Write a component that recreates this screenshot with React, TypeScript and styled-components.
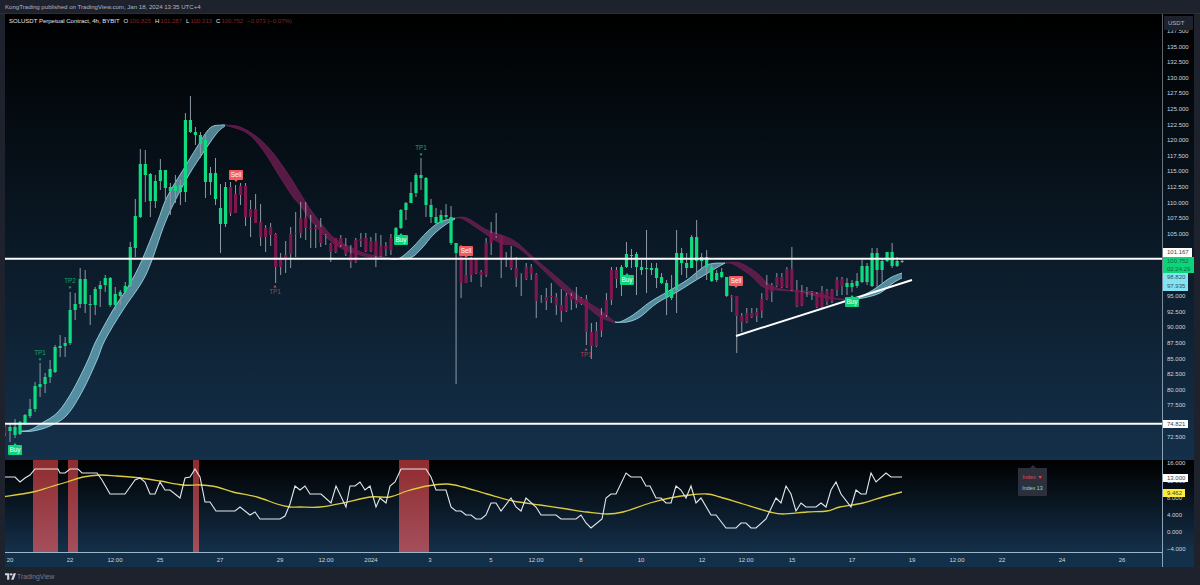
import React from "react";
import styled, { createGlobalStyle } from "styled-components";

type Pt = [number, number];
type Candle = [number, number, number, number];

const FONT = '"Liberation Sans", Arial, sans-serif';

const downA: Candle[] = [[425, 427, 433, 436]];
const upA: Candle[] = [
  [423, 427, 431, 442], [419, 427, 435, 438], [421, 422, 434, 435], [414, 415, 423, 425], [399, 409, 416, 418],
  [382, 386, 409, 412], [363, 384, 387, 397], [373, 377, 384, 393], [360, 369, 377, 383], [345, 347, 372, 373],
  [335, 346, 348, 357], [337, 343, 346, 357], [292, 310, 343, 345], [293, 304, 310, 320], [268, 279, 304, 308],
  [270, 279, 304, 313], [295, 304, 305, 325], [287, 289, 305, 315], [281, 285, 289, 307], [275, 278, 285, 292],
  [277, 278, 305, 307], [287, 294, 305, 310], [290, 292, 296, 305], [282, 286, 292, 293], [242, 247, 286, 287],
  [199, 216, 248, 257], [149, 164, 217, 218], [150, 164, 175, 202], [173, 174, 201, 217], [175, 181, 201, 208],
  [159, 170, 181, 190], [170, 170, 188, 202], [183, 187, 191, 215], [175, 186, 191, 203], [180, 185, 192, 205],
  [113, 120, 192, 202], [96, 120, 132, 133], [127, 132, 135, 145], [132, 135, 144, 158], [133, 140, 182, 198],
  [167, 173, 182, 195], [158, 173, 199, 205], [184, 208, 224, 253], [182, 187, 224, 227],
];
const downB: Candle[] = [
  [182, 187, 213, 216], [185, 194, 213, 213], [183, 186, 195, 205], [183, 186, 217, 226], [200, 209, 217, 237],
  [194, 209, 223, 223], [204, 222, 237, 246], [225, 228, 237, 252], [223, 227, 235, 246], [233, 234, 267, 283],
  [253, 258, 267, 275], [241, 255, 258, 273], [227, 234, 254, 268], [212, 233, 234, 257], [202, 218, 233, 238],
  [202, 218, 228, 240], [215, 228, 229, 248], [225, 227, 229, 248], [218, 227, 243, 247], [234, 235, 236, 245],
  [243, 244, 252, 262], [238, 238, 252, 253], [235, 238, 245, 247], [238, 246, 254, 256], [245, 254, 262, 268],
  [238, 240, 262, 263], [233, 239, 241, 247], [233, 238, 251, 252], [237, 241, 251, 252], [233, 241, 256, 267],
  [235, 246, 256, 257], [242, 246, 249, 256], [234, 238, 250, 255],
];
const upB: Candle[] = [
  [227, 228, 237, 238], [209, 210, 228, 229], [202, 203, 210, 220], [182, 193, 203, 203], [173, 175, 193, 197],
  [158, 175, 178, 190], [177, 178, 205, 217], [199, 205, 217, 223], [208, 217, 223, 224], [210, 215, 223, 223],
  [204, 215, 217, 220], [206, 217, 243, 245], [243, 243, 253, 384],
];
const downC: Candle[] = [
  [245, 253, 283, 298], [258, 275, 283, 283], [257, 259, 275, 282], [258, 259, 273, 274], [270, 272, 275, 287],
  [238, 243, 275, 277], [222, 233, 243, 255], [213, 234, 236, 238], [235, 235, 259, 278], [252, 258, 259, 267],
  [246, 260, 268, 270], [257, 268, 278, 287], [273, 273, 274, 296], [263, 267, 279, 280], [264, 267, 274, 280],
  [273, 274, 301, 318], [295, 301, 302, 303], [288, 297, 301, 310], [283, 296, 297, 303], [293, 297, 305, 315],
  [289, 305, 311, 322], [293, 296, 311, 312], [293, 296, 300, 310], [287, 300, 304, 308], [297, 298, 304, 305],
  [295, 299, 332, 345], [323, 332, 346, 359], [322, 331, 346, 347], [308, 315, 331, 337], [293, 300, 315, 317],
  [267, 270, 300, 305], [267, 270, 279, 288],
];
const upC: Candle[] = [
  [265, 267, 283, 296], [242, 254, 267, 268], [249, 255, 256, 268], [252, 254, 267, 295], [260, 267, 270, 275],
  [230, 268, 269, 293], [263, 268, 270, 275], [263, 268, 278, 288], [273, 277, 283, 284], [280, 283, 298, 315],
  [275, 289, 298, 300], [230, 253, 290, 313], [248, 253, 263, 275], [253, 263, 268, 278], [235, 237, 268, 268],
  [220, 237, 261, 280], [253, 257, 261, 270], [250, 257, 267, 280], [263, 267, 281, 282], [270, 273, 280, 282],
  [268, 272, 277, 278], [277, 277, 296, 297],
];
const downD: Candle[] = [
  [295, 296, 297, 312], [296, 296, 316, 353], [313, 316, 322, 332], [308, 313, 322, 323], [308, 313, 317, 318],
  [308, 312, 316, 322], [293, 299, 311, 318], [275, 285, 299, 300], [283, 285, 292, 302], [273, 277, 286, 287],
  [273, 277, 287, 288], [267, 269, 287, 288], [247, 269, 290, 291], [280, 290, 306, 307], [285, 292, 305, 306],
  [287, 291, 292, 297], [291, 292, 293, 300], [292, 294, 307, 308], [286, 291, 307, 308], [289, 291, 302, 305],
  [289, 290, 301, 303], [277, 280, 290, 296], [277, 279, 286, 295],
];
const upD: Candle[] = [
  [278, 283, 287, 295], [280, 283, 287, 292], [273, 281, 286, 288], [260, 266, 282, 283], [263, 266, 282, 285],
  [248, 253, 286, 287], [248, 253, 270, 288], [258, 261, 270, 283], [252, 252, 261, 262], [243, 252, 266, 268],
  [257, 261, 266, 267], [258, 261, 262, 263],
];

const runs: { up: boolean; rows: Candle[] }[] = [
  { up: false, rows: downA },
  { up: true, rows: upA },
  { up: false, rows: downB },
  { up: true, rows: upB },
  { up: false, rows: downC },
  { up: true, rows: upC },
  { up: false, rows: downD },
  { up: true, rows: upD },
];

const candles = runs
  .flatMap((r) => r.rows.map((c) => ({ up: r.up, c })))
  .map((d, i) => ({ ...d, x: 10 + (i - 1) * 5.012 }));

const ribbons: { up: boolean; top: Pt[]; bottom: Pt[] }[] = [
  {
    up: true,
    top: [[20, 431], [30, 430], [42, 423], [58, 412], [73, 390], [88, 360], [96, 341], [113, 310], [128, 287], [142, 260], [157, 223], [167, 197], [183, 170], [197, 147], [210, 128], [222, 125], [225, 125]],
    bottom: [[20, 431.5], [33, 431], [50, 426], [67, 415], [83, 390], [97, 360], [105, 340], [123, 310], [142, 282], [152, 260], [165, 223], [177, 197], [190, 173], [203, 153], [217, 133], [225, 126]],
  },
  {
    up: false,
    top: [[225, 125], [240, 127], [257, 137], [273, 153], [290, 177], [300, 193], [313, 213], [333, 237], [350, 247], [367, 254], [390, 258]],
    bottom: [[225, 125], [247, 133], [263, 150], [280, 177], [293, 197], [300, 205], [313, 223], [333, 243], [350, 252], [373, 258], [390, 259]],
  },
  {
    up: true,
    top: [[390, 259], [400, 258], [413, 247], [427, 232], [440, 222], [455, 218]],
    bottom: [[390, 259], [410, 258], [422, 248], [433, 235], [445, 225], [455, 219]],
  },
  {
    up: false,
    top: [[455, 218], [467, 218], [487, 230], [513, 240], [533, 257], [560, 280], [580, 297], [600, 310], [615, 322]],
    bottom: [[455, 218], [463, 219], [480, 230], [500, 243], [517, 247], [540, 267], [567, 293], [587, 307], [600, 317], [615, 323]],
  },
  {
    up: true,
    top: [[615, 322], [620, 322], [633, 315], [650, 302], [667, 292], [687, 280], [707, 265], [725, 263]],
    bottom: [[615, 322], [627, 322], [640, 317], [657, 303], [677, 292], [693, 282], [713, 270], [725, 263]],
  },
  {
    up: false,
    top: [[725, 263], [740, 263], [757, 273], [770, 285], [787, 290], [813, 292], [833, 298], [845, 299]],
    bottom: [[725, 263], [733, 264], [750, 275], [763, 287], [777, 290], [800, 292], [820, 297], [845, 300]],
  },
  {
    up: true,
    top: [[845, 299], [857, 298], [873, 290], [890, 278], [902, 273]],
    bottom: [[845, 300], [863, 298], [880, 293], [893, 283], [902, 278]],
  },
];

const indexLine: Pt[] = [
  [5, 477], [15, 477], [20, 482], [25, 478], [30, 475], [35, 469], [48, 469], [58, 469], [60, 473], [65, 473], [70, 469], [78, 469], [82, 473], [97, 473],
  [102, 480], [110, 494], [125, 494], [130, 487], [135, 480], [140, 478], [145, 482], [150, 494], [155, 494], [160, 482], [165, 490], [170, 490], [180, 498],
  [185, 478], [190, 477], [195, 469], [200, 477], [205, 502], [210, 502], [216, 511], [235, 511], [240, 507], [250, 515], [255, 512], [260, 519], [280, 519],
  [285, 516], [290, 504], [295, 486], [300, 490], [305, 486], [310, 494], [321, 494], [331, 503], [336, 486], [346, 507], [350, 486], [355, 486], [360, 482],
  [365, 490], [370, 486], [376, 507], [380, 498], [386, 503], [390, 486], [395, 482], [401, 469], [426, 469], [431, 477], [436, 490], [446, 490], [451, 507],
  [456, 511], [461, 511], [466, 515], [471, 515], [476, 519], [481, 519], [486, 515], [491, 503], [496, 503], [501, 511], [511, 498], [516, 507], [521, 511],
  [526, 498], [536, 507], [541, 515], [556, 515], [561, 519], [576, 519], [581, 515], [586, 523], [591, 528], [602, 519], [606, 498], [611, 494], [616, 494],
  [626, 473], [631, 477], [641, 477], [646, 486], [650, 486], [656, 498], [661, 498], [666, 503], [671, 503], [676, 486], [681, 490], [686, 498], [691, 486],
  [696, 503], [701, 498], [711, 515], [716, 515], [726, 528], [736, 528], [741, 523], [746, 523], [751, 528], [756, 528], [766, 519], [776, 498], [781, 503],
  [786, 486], [791, 494], [796, 511], [801, 503], [806, 507], [816, 507], [821, 503], [826, 507], [831, 490], [836, 482], [841, 494], [851, 507], [856, 490],
  [861, 494], [866, 494], [871, 473], [876, 482], [886, 473], [891, 477], [902, 477],
];

const signalLine: Pt[] = [
  [5, 496.5], [33, 492], [50, 487], [67, 482], [83, 477], [100, 475], [117, 476], [140, 478], [160, 481], [183, 485], [200, 485], [217, 487], [233, 492],
  [257, 497], [277, 504], [290, 507], [300, 507], [320, 507], [343, 503], [370, 497], [390, 497], [407, 491], [427, 486], [447, 484], [463, 487], [487, 494],
  [513, 501], [540, 505], [567, 509], [587, 512], [607, 514], [623, 512], [650, 503], [670, 498], [690, 495], [707, 494], [720, 497], [743, 504], [770, 512],
  [783, 514], [807, 512], [827, 511], [840, 507], [863, 503], [883, 497], [902, 492],
];

const zones: [number, number][] = [[33, 58], [68, 78], [193, 199], [399, 429]];

const signals: { kind: "Buy" | "Sell"; x: number; y: number }[] = [
  { kind: "Buy", x: 15, y: 445 },
  { kind: "Sell", x: 236, y: 170 },
  { kind: "Buy", x: 401, y: 235 },
  { kind: "Sell", x: 466, y: 246 },
  { kind: "Buy", x: 627, y: 275 },
  { kind: "Sell", x: 736, y: 276 },
  { kind: "Buy", x: 852, y: 297 },
];

const targets: { label: string; up: boolean; x: number; y: number }[] = [
  { label: "TP1", up: true, x: 40, y: 353 },
  { label: "TP2", up: true, x: 70, y: 281 },
  { label: "TP1", up: true, x: 421, y: 148 },
  { label: "TP1", up: false, x: 275, y: 292 },
  { label: "TP1", up: false, x: 586, y: 355 },
];

// these levels sit behind the last-price tags in the picture, so they keep their row but show nothing
const coveredTicks = ["102.500", "100.000", "97.500", "75.000"];
const priceTicks = Array.from({ length: 27 }, (_, i) => (137.5 - i * 2.5).toFixed(3));
const indexTicks = ["16.000", "12.000", "8.000", "4.000", "0.000", "\u22124.000"];
const timeLabels: [string, number][] = [
  ["20", 15], ["22", 75], ["12:00", 120], ["25", 165], ["27", 225], ["29", 285], ["12:00", 331], ["2024", 376], ["3", 435], ["5", 496], ["12:00", 541],
  ["8", 586], ["10", 646], ["12", 707], ["12:00", 751], ["15", 797], ["17", 857], ["19", 917], ["12:00", 962], ["22", 1007], ["24", 1067], ["26", 1127],
];

// catmull-rom through the points, so a ribbon can be read off the chart as a few samples
function spline(pts: Pt[], move = true): string {
  let d = move ? `M${pts[0][0]} ${pts[0][1]}` : `L${pts[0][0]} ${pts[0][1]}`;
  for (let i = 0; i < pts.length - 1; i++) {
    const p0 = pts[i - 1] ?? pts[i];
    const p1 = pts[i];
    const p2 = pts[i + 1];
    const p3 = pts[i + 2] ?? p2;
    const c1x = p1[0] + (p2[0] - p0[0]) / 6;
    const c1y = p1[1] + (p2[1] - p0[1]) / 6;
    const c2x = p2[0] - (p3[0] - p1[0]) / 6;
    const c2y = p2[1] - (p3[1] - p1[1]) / 6;
    d += `C${c1x.toFixed(1)} ${c1y.toFixed(1)} ${c2x.toFixed(1)} ${c2y.toFixed(1)} ${p2[0]} ${p2[1]}`;
  }
  return d;
}

const polyline = (pts: Pt[]) => pts.map((p) => p.join(",")).join(" ");

function SignalBadge({ kind, x, y }: { kind: "Buy" | "Sell"; x: number; y: number }) {
  const buy = kind === "Buy";
  const arrow = buy
    ? `${x - 2},${y + 0.5} ${x},${y - 2} ${x + 2},${y + 0.5}`
    : `${x - 2},${y + 9.5} ${x},${y + 12} ${x + 2},${y + 9.5}`;
  return (
    <g>
      <BadgeArrow $buy={buy} points={arrow} />
      <BadgeBox $buy={buy} x={x - 7} y={y} width={14} height={10} rx={1} />
      <BadgeText x={x} y={y + 7.2}>{kind}</BadgeText>
    </g>
  );
}

function TargetMark({ label, up, x, y }: { label: string; up: boolean; x: number; y: number }) {
  const arrow = up
    ? `${x - 1.5},${y + 5.5} ${x + 1.5},${y + 5.5} ${x},${y + 8}`
    : `${x - 1.5},${y - 4.5} ${x + 1.5},${y - 4.5} ${x},${y - 7}`;
  return (
    <g>
      <TargetArrow $up={up} points={arrow} />
      <TargetText $up={up} x={x} y={y + 2.2}>{label}</TargetText>
    </g>
  );
}

export default function App() {
  return (
    <Page>
      <GlobalStyle />
      <Header>KongTrading published on TradingView.com, Jan 18, 2024 13:35 UTC+4</Header>
      <ChartFrame>
        <MainPane>
          <Legend>
            <Symbol>SOLUSDT Perpetual Contract, 4h, BYBIT</Symbol>
            <Ohlc><b>O</b>100.825</Ohlc>
            <Ohlc><b>H</b>101.287</Ohlc>
            <Ohlc><b>L</b>100.313</Ohlc>
            <Ohlc><b>C</b>100.752</Ohlc>
            <Ohlc>&minus;0.073 (&minus;0.07%)</Ohlc>
          </Legend>
          <PaneSvg viewBox="5 14 1157 446">
            {ribbons.map((r, i) => (
              <g key={i}>
                <RibbonFill $up={r.up} d={spline(r.top) + spline([...r.bottom].reverse(), false) + "Z"} />
                <RibbonEdge $up={r.up} d={spline(r.top)} />
                <RibbonEdge $up={r.up} d={spline(r.bottom)} />
              </g>
            ))}
            {candles.map(({ x, c }, i) => (
              <Wick key={i} x={x - 0.5} width={1} y={c[0]} height={c[3] - c[0]} />
            ))}
            {candles.map(({ x, c, up }, i) => (
              <Body key={i} $up={up} x={x - 1.6} width={3.2} y={c[1]} height={Math.max(c[2] - c[1], 1)} />
            ))}
            <LevelLine x1={5} x2={1162} y1={258.7} y2={258.7} />
            <LevelLine x1={5} x2={1162} y1={423.8} y2={423.8} />
            <LevelLine x1={736} y1={336} x2={912} y2={280} />
            {targets.map((t, i) => <TargetMark key={i} {...t} />)}
            {signals.map((s, i) => <SignalBadge key={i} {...s} />)}
          </PaneSvg>
        </MainPane>
        <MainAxis>
          {priceTicks.map((t) => <PriceTick key={t}>{coveredTicks.includes(t) ? "" : t}</PriceTick>)}
          <UnitBadge>USDT</UnitBadge>
          <LastPrices>
            <PriceTag $bg="#ffffff" $w={29} $color="#3a3f4a">101.167</PriceTag>
            <CurrentTag>100.752<br />02:24:29</CurrentTag>
            <RibbonTag>98.820<br />97.935</RibbonTag>
          </LastPrices>
          <PriceTag $bg="#ffffff" $w={25} $color="#3a3f4a" $top={405.5}>74.821</PriceTag>
        </MainAxis>
        <IndicatorPane>
          <PaneSvg viewBox="5 460 1157 92">
            <defs>
              <linearGradient id="zone" x1="0" y1="0" x2="0" y2="1">
                <stop offset="0" stopColor="#8f2c2e" />
                <stop offset="1" stopColor="#a44f5c" />
              </linearGradient>
            </defs>
            {zones.map(([a, b]) => <Zone key={a} x={a} width={b - a} y={460} height={92} />)}
            <SignalPath d={spline(signalLine)} />
            <IndexPath points={polyline(indexLine)} />
          </PaneSvg>
          <Tooltip>
            <TooltipHead>Index &#9660;</TooltipHead>
            <TooltipValue>Index 13</TooltipValue>
          </Tooltip>
        </IndicatorPane>
        <IndicatorAxis>
          <TickList>{indexTicks.map((t) => <IndexTick key={t}>{t}</IndexTick>)}</TickList>
          <PriceTag $bg="#ffffff" $w={25} $color="#3a3f4a" $top={13.5}>13.000</PriceTag>
          <PriceTag $bg="#ffe93b" $w={22} $color="#3a3f30" $top={29}>9.462</PriceTag>
        </IndicatorAxis>
        <TimeAxis>
          {timeLabels.map(([label, x], i) => (
            <TimeLabel key={i} $gap={x - (i ? timeLabels[i - 1][1] : -5) - 30}>{label}</TimeLabel>
          ))}
        </TimeAxis>
        <AxisCorner />
      </ChartFrame>
      <Footer>
        <svg width="11" height="7" viewBox="0 0 36 22" aria-hidden="true">
          <path d="M14 22H7V7H0V0h14v22ZM28 22h-8L28 0h8l-8 22Z" fill="#d1d4dc" />
          <circle cx="20" cy="4" r="4" fill="#d1d4dc" />
        </svg>
        <FooterText>TradingView</FooterText>
      </Footer>
    </Page>
  );
}

const GlobalStyle = createGlobalStyle`
  html, body {
    margin: 0;
    padding: 0;
    width: 1200px;
    height: 585px;
    overflow: hidden;
    background: #1e222d;
  }
  * {
    box-sizing: border-box;
  }
`;

const Page = styled.div`
  width: 1200px;
  height: 585px;
  display: grid;
  grid-template-rows: 14px 553px 18px;
  background: #1e222d;
  font-family: ${FONT};
`;

const Header = styled.div`
  display: flex;
  align-items: center;
  padding-left: 5px;
  font-size: 6.1px;
  color: #b2b5be;
  border-bottom: 1px solid #2a2e39;
`;

const ChartFrame = styled.div`
  display: grid;
  grid-template-columns: 1157px 32px;
  grid-template-rows: 446px 92px 15px;
  margin: 0 6px 0 5px;
`;

const paneBackground = "linear-gradient(180deg, #000000 0%, #14304a 100%)";

const MainPane = styled.div`
  position: relative;
  background: ${paneBackground};
`;

const PaneSvg = styled.svg`
  display: block;
  width: 100%;
  height: 100%;
`;

const Legend = styled.div`
  position: absolute;
  top: 4px;
  left: 4px;
  display: flex;
  gap: 4px;
  font-size: 6px;
  line-height: 7px;
  color: #862121;
`;

const Symbol = styled.span`
  color: #e0e3eb;
`;

const Ohlc = styled.span`
  b {
    font-weight: 400;
    color: #e0e3eb;
    margin-right: 1px;
  }
`;

const RibbonFill = styled.path<{ $up: boolean }>`
  fill: ${(p) => (p.$up ? "rgba(128, 205, 225, 0.62)" : "rgba(128, 30, 90, 0.68)")};
`;

const RibbonEdge = styled.path<{ $up: boolean }>`
  fill: none;
  stroke: ${(p) => (p.$up ? "#a6dfeb" : "#6e1f55")};
  stroke-width: 0.8;
`;

const Wick = styled.rect`
  fill: #8e99a4;
`;

const Body = styled.rect<{ $up: boolean }>`
  fill: ${(p) => (p.$up ? "#0fdc80" : "#7f1650")};
`;

const LevelLine = styled.line`
  stroke: #ffffff;
  stroke-width: 1.9;
`;

const BadgeBox = styled.rect<{ $buy: boolean }>`
  fill: ${(p) => (p.$buy ? "#0fd47c" : "#f55b5b")};
`;

const BadgeArrow = styled.polygon<{ $buy: boolean }>`
  fill: ${(p) => (p.$buy ? "#0fd47c" : "#f55b5b")};
`;

const BadgeText = styled.text`
  font-family: ${FONT};
  font-size: 6.4px;
  fill: #ffffff;
  text-anchor: middle;
`;

const TargetArrow = styled.polygon<{ $up: boolean }>`
  fill: ${(p) => (p.$up ? "#16a668" : "#c9505c")};
`;

const TargetText = styled.text<{ $up: boolean }>`
  font-family: ${FONT};
  font-size: 6.4px;
  text-anchor: middle;
  fill: ${(p) => (p.$up ? "#16a668" : "#a2414f")};
`;

const MainAxis = styled.div`
  position: relative;
  padding: 10.1px 0 0 4px;
  background: ${paneBackground};
  border-left: 1px solid;
  border-image: linear-gradient(180deg, #5c5f66, #8ea5b8) 1;
  overflow: hidden;
`;

const PriceTick = styled.div`
  height: 15.6px;
  line-height: 15.6px;
  font-size: 6px;
  color: #d1d4dc;
`;

const UnitBadge = styled.div`
  position: absolute;
  top: 2px;
  left: 1px;
  width: 29px;
  height: 14px;
  padding-left: 4px;
  display: flex;
  align-items: center;
  background: #1e222d;
  border-radius: 1px;
  font-size: 6px;
  color: #b2b5be;
`;

const LastPrices = styled.div`
  position: absolute;
  top: 234px;
  left: 0;
  display: flex;
  flex-direction: column;
  align-items: flex-start;
`;

const PriceTag = styled.div<{ $bg: string; $w: number; $color: string; $top?: number }>`
  ${(p) => (p.$top !== undefined ? `position: absolute; left: 0; top: ${p.$top}px; height: 8px; line-height: 8px;` : "height: 9px; line-height: 9px;")}
  width: ${(p) => p.$w}px;
  padding-left: 4px;
  font-size: 6px;
  background: ${(p) => p.$bg};
  color: ${(p) => p.$color};
`;

const CurrentTag = styled.div`
  width: 31px;
  height: 16px;
  padding-left: 4px;
  line-height: 8px;
  font-size: 6px;
  background: #0ad678;
  color: #1f5d45;
`;

const RibbonTag = styled.div`
  width: 25px;
  height: 18px;
  padding-left: 4px;
  line-height: 9px;
  font-size: 6px;
  background: #84e2f2;
  color: #2e5560;
`;

const IndicatorPane = styled.div`
  position: relative;
  background: ${paneBackground};
`;

const Zone = styled.rect`
  fill: url(#zone);
`;

const IndexPath = styled.polyline`
  fill: none;
  stroke: #e4e8ec;
  stroke-width: 1.1;
`;

const SignalPath = styled.path`
  fill: none;
  stroke: #dccb3c;
  stroke-width: 1.3;
`;

const Tooltip = styled.div`
  position: absolute;
  top: 8px;
  left: 1013px;
  width: 29px;
  height: 28px;
  padding-top: 7px;
  display: flex;
  flex-direction: column;
  align-items: center;
  gap: 6px;
  background: #2c303b;
  border-radius: 1px;
  font-size: 5.4px;
  line-height: 5px;

  &::before {
    content: "";
    position: absolute;
    top: -3px;
    left: 11.5px;
    border: 3px solid transparent;
    border-top: 0;
    border-bottom-color: #2c303b;
  }
`;

const TooltipHead = styled.span`
  color: #e8405a;
`;

const TooltipValue = styled.span`
  color: #8fd3e8;
`;

const IndicatorAxis = styled.div`
  position: relative;
  padding-left: 4px;
  background: ${paneBackground};
  border-left: 1px solid #8ea5b8;
`;

const TickList = styled.div`
  margin-top: -4.6px;
`;

const IndexTick = styled.div`
  height: 17.1px;
  line-height: 17.1px;
  font-size: 6px;
  color: #d1d4dc;
`;

const TimeAxis = styled.div`
  display: flex;
  align-items: center;
  background: #13304a;
  border-top: 1px solid #9db6c9;
  overflow: hidden;
`;

const TimeLabel = styled.span<{ $gap: number }>`
  flex: 0 0 30px;
  margin-left: ${(p) => p.$gap}px;
  text-align: center;
  font-size: 6px;
  color: #d1d4dc;
`;

const AxisCorner = styled.div`
  background: #13304a;
  border-left: 1px solid #8ea5b8;
`;

const Footer = styled.div`
  display: flex;
  align-items: center;
  gap: 1px;
  padding-left: 5px;
`;

const FooterText = styled.span`
  font-size: 6.8px;
  color: #787b86;
`;
